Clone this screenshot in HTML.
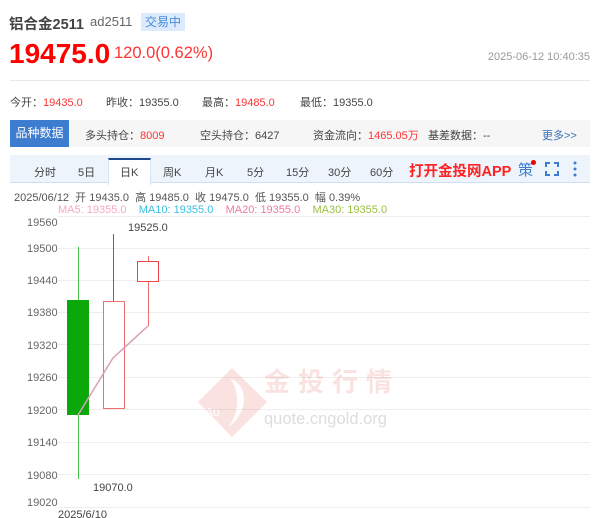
<!DOCTYPE html>
<html><head><meta charset="utf-8"><style>
body{margin:0;width:600px;height:518px;background:#fff;font-family:"Liberation Sans","Noto Sans CJK SC",sans-serif;position:relative;overflow:hidden}
.a{position:absolute;white-space:nowrap}
.r{color:#f33}
.s{font-size:11px;color:#444}
</style></head><body>
<div class="a" style="left:9px;top:13px;font-size:14.5px;font-weight:bold;color:#444">铝合金2511</div>
<div class="a" style="left:90px;top:14px;font-size:13px;color:#666">ad2511</div>
<div class="a" style="left:141px;top:13px;width:44px;height:18px;background:#dbeafc;color:#4a8ad6;font-size:12px;line-height:18px;text-align:center">交易中</div>
<div class="a" style="left:9px;top:38px;font-size:28px;font-weight:bold;color:#f00">19475.0</div>
<div class="a r" style="left:114px;top:44px;font-size:16.5px">120.0(0.62%)</div>
<div class="a" style="right:10px;top:51px;font-size:11px;color:#999">2025-06-12 10:40:35</div>
<div class="a" style="left:10px;top:80px;width:580px;height:1px;background:#e8e8e8"></div>
<div class="a s" style="left:10px;top:94px">今开：<span class="r">19435.0</span></div>
<div class="a s" style="left:106px;top:94px">昨收：19355.0</div>
<div class="a s" style="left:202px;top:94px">最高：<span class="r">19485.0</span></div>
<div class="a s" style="left:300px;top:94px">最低：19355.0</div>
<div class="a" style="left:10px;top:120px;width:580px;height:27px;background:#f6f6f6"></div>
<div class="a" style="left:10px;top:120px;width:59px;height:27px;background:#3d7dd0;color:#fff;font-size:12px;line-height:27px;text-align:center">品种数据</div>
<div class="a s" style="left:85px;top:127px">多头持仓：<span class="r">8009</span></div>
<div class="a s" style="left:200px;top:127px">空头持仓：6427</div>
<div class="a s" style="left:313px;top:127px">资金流向：<span class="r">1465.05万</span></div>
<div class="a s" style="left:428px;top:127px">基差数据：--</div>
<div class="a s" style="left:542px;top:127px;color:#3a6fb5">更多&gt;&gt;</div>
<div class="a" style="left:10px;top:155px;width:580px;height:27px;background:#eef4fc;border-bottom:1px solid #cfdff3"></div>
<div class="a" style="left:108px;top:158px;width:41px;height:25px;background:#fff;border-top:2px solid #1d4a8c;border-left:1px solid #d8e4f2;border-right:1px solid #d8e4f2"></div>
<div class="a" style="left:0;top:164px;font-size:11px;color:#444;width:600px">
<span class="a" style="left:34px">分时</span><span class="a" style="left:78px">5日</span><span class="a" style="left:120px">日K</span><span class="a" style="left:163px">周K</span><span class="a" style="left:205px">月K</span><span class="a" style="left:247px">5分</span><span class="a" style="left:286px">15分</span><span class="a" style="left:328px">30分</span><span class="a" style="left:370px">60分</span></div>
<div class="a" style="left:409px;top:160px;font-size:14.5px;font-weight:bold;color:#f22">打开金投网APP</div>
<div class="a" style="left:518px;top:159px;font-size:15px;color:#3d7dd0">策</div>
<div class="a" style="left:531px;top:160px;width:5px;height:5px;border-radius:50%;background:#e00"></div>
<svg class="a" style="left:545px;top:162px" width="14" height="14"><path d="M1 5V1h4M9 1h4v4M13 9v4h-4M5 13H1v-4" fill="none" stroke="#3d7dd0" stroke-width="2"/></svg>
<svg class="a" style="left:572px;top:161px" width="6" height="16"><circle cx="3" cy="2" r="1.5" fill="#3d7dd0"/><circle cx="3" cy="8" r="1.5" fill="#3d7dd0"/><circle cx="3" cy="14" r="1.5" fill="#3d7dd0"/></svg>
<div class="a" style="left:14px;top:189px;font-size:11px;color:#555">2025/06/12 &nbsp;开 19435.0 &nbsp;高 19485.0 &nbsp;收 19475.0 &nbsp;低 19355.0 &nbsp;幅 0.39%</div>
<div class="a" style="left:58px;top:204px;font-size:11px"><span style="color:#f7a8c4">MA5: 19355.0</span> &nbsp;&nbsp;&nbsp;<span style="color:#3cc0e0">MA10: 19355.0</span> &nbsp;&nbsp;&nbsp;<span style="color:#f07aa0">MA20: 19355.0</span> &nbsp;&nbsp;&nbsp;<span style="color:#9cc040">MA30: 19355.0</span></div>
<svg class="a" style="left:0;top:0" width="600" height="518">
<g stroke="#eee" stroke-width="1">
<line x1="58" y1="216.5" x2="590" y2="216.5"/>
<line x1="58" y1="248.5" x2="590" y2="248.5"/><line x1="58" y1="280.5" x2="590" y2="280.5"/><line x1="58" y1="312.5" x2="590" y2="312.5"/><line x1="58" y1="344.5" x2="590" y2="344.5"/><line x1="58" y1="377.5" x2="590" y2="377.5"/><line x1="58" y1="409.5" x2="590" y2="409.5"/><line x1="58" y1="442.5" x2="590" y2="442.5"/><line x1="58" y1="474.5" x2="590" y2="474.5"/><line x1="58" y1="507.5" x2="590" y2="507.5"/></g>
<g font-size="11" fill="#666" font-family="Liberation Sans,sans-serif">
<text x="27" y="226">19560</text><text x="27" y="252">19500</text><text x="27" y="284">19440</text><text x="27" y="316">19380</text><text x="27" y="349">19320</text><text x="27" y="381">19260</text><text x="27" y="414">19200</text><text x="27" y="446">19140</text><text x="27" y="479">19080</text><text x="27" y="506">19020</text>
<text x="128" y="231" fill="#444">19525.0</text><text x="93" y="491" fill="#444">19070.0</text><text x="58" y="518" fill="#444">2025/6/10</text></g>
<g opacity="0.16"><path d="M232 368L267 402L232 437L198 402Z" fill="#e0503c"/><path d="M230 378C248 386 250 410 228 428C240 412 240 392 230 378Z" fill="#fff"/><text x="205" y="416" font-size="12" fill="#fff" font-family="Liberation Sans,sans-serif">Au</text><text x="264" y="391" font-size="26" fill="#e0503c" font-weight="bold" letter-spacing="8" font-family="Noto Sans CJK SC,sans-serif">金投行情</text></g>
<text x="264" y="424" font-size="16.5" fill="#ddd" font-family="Liberation Sans,sans-serif">quote.cngold.org</text>
<line x1="78.5" y1="247" x2="78.5" y2="479" stroke="#4cc24c"/>
<rect x="67" y="300" width="22" height="115" fill="#0aa80a"/>
<line x1="113.5" y1="234" x2="113.5" y2="301" stroke="#e33"/>
<rect x="103.5" y="301.5" width="21" height="107" fill="#fff" stroke="#f07070"/>
<line x1="148.5" y1="256" x2="148.5" y2="326" stroke="#f07070"/>
<rect x="137.5" y="261.5" width="21" height="20" fill="#fff" stroke="#e44"/>
<polyline points="78,415 113,358 148,326" fill="none" stroke="#d8a0b8" stroke-width="1.5"/>
</svg>
</body></html>
